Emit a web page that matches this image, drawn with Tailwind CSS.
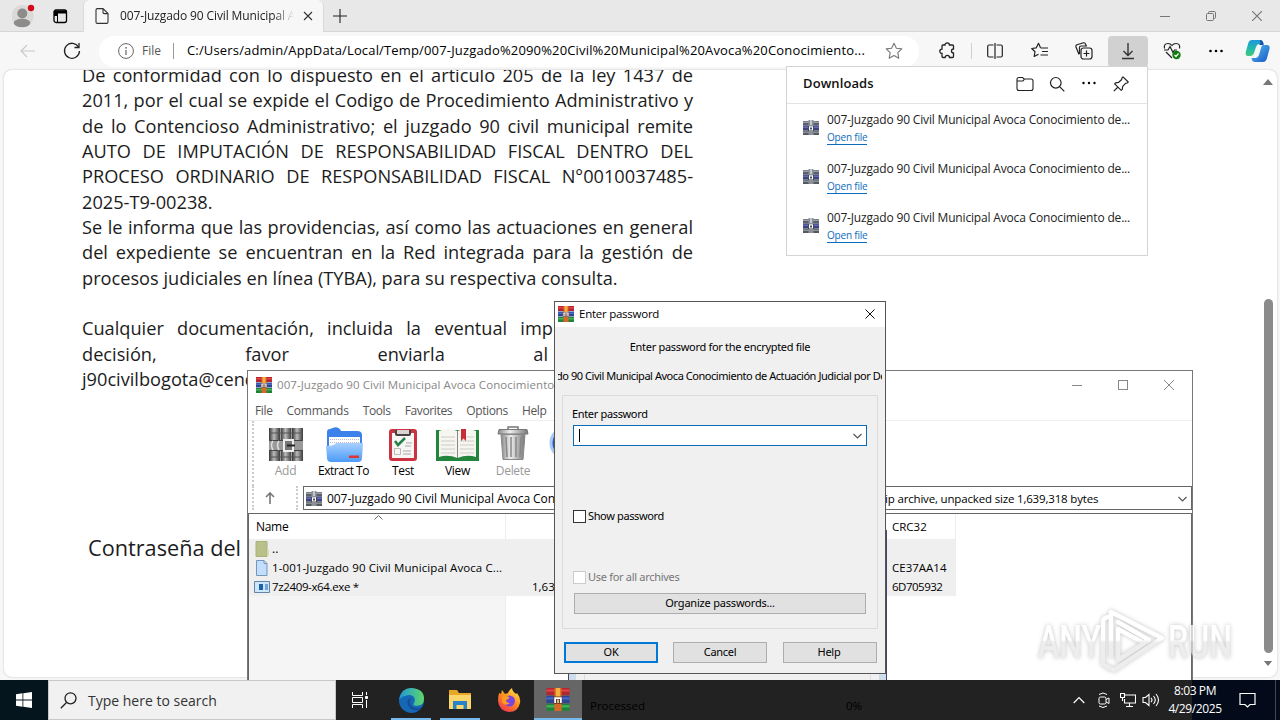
<!DOCTYPE html>
<html lang="en">
<head>
    <meta charset="UTF-8">
    <meta name="viewport" content="width=device-width, initial-scale=1.0">
    <title>007-Juzgado 90 Civil Municipal</title>
    <script src="https://cdn.jsdelivr.net/npm/@tailwindcss/browser@4"></script>
</head>
<body class="relative w-[1280px] h-[720px] overflow-hidden bg-[#f7f7f7] text-black font-['Open_Sans','Noto_Sans',sans-serif]">

    <!-- Shared icons -->
    <svg class="hidden">
        <symbol id="rar" viewBox="0 0 16 16">
            <path fill="#b3262f" d="M0 0h16v5H0z"/><path fill="#dc4444" d="M0 1h16v1.500H0z"/>
            <path fill="#2c4596" d="M0 5.500h16v5H0z"/><path fill="#4a69c8" d="M0 6.500h16V8H0z"/>
            <path fill="#21823b" d="M0 11h16v5H0z"/><path fill="#43b355" d="M0 12h16v1.500H0z"/>
            <path fill="#d8672a" d="M5.500 0h5v16h-5z"/><path fill="#f4b13e" d="M6.500 0h3v6h-3z"/>
            <path fill="#6a3c20" d="M5 6h6v5H5z"/><path fill="none" stroke="#fff" stroke-width="1.200" d="M6 10.500V7h4v3.500"/><path fill="#f0e4cc" d="M7.500 8h1v2.500h-1z"/>
        </symbol>
        <symbol id="zip" viewBox="0 0 16 16">
            <path fill="#5a5f68" d="M0 1h16v4.500H0z"/><path fill="#9da1a8" d="M0 1.500h16V3H0z"/>
            <path fill="#3d4280" d="M0 5.500h16v5H0z"/><path fill="#666cae" d="M0 6.500h16V8H0z"/>
            <path fill="#555a60" d="M0 10.500h16V15H0z"/><path fill="#8b9097" d="M0 11.500h16V13H0z"/>
            <path fill="#8b9099" d="M5.500 0h5v15h-5z"/><path fill="#c4c8ce" d="M7 0h2v5H7z"/>
            <path fill="#33384c" d="M5 6h6v5H5z"/><path fill="none" stroke="#fff" stroke-width="1.200" d="M6.500 10V6.800h3V10z"/>
        </symbol>
    </svg>

    <!-- Browser -->
    <div class="flex flex-col w-[1280px] h-[680px]">
        <div class="flex h-8 bg-[#e8e8e8] border-b border-[#d6d6d6]">
            <div class="flex items-center w-[83px] pl-3">
                <svg class="w-6 h-6" viewBox="0 0 24 24"><circle cx="10.500" cy="12" r="11" fill="#dbd9d7"/><circle cx="10.300" cy="9.500" r="5" fill="#8e8c8a"/><ellipse cx="10" cy="19" rx="8.300" ry="4.200" fill="#8e8c8a"/><circle cx="19" cy="4" r="3.200" fill="#d20a1b"/></svg>
                <svg class="ml-4 w-4 h-4" viewBox="0 0 16 16"><rect x="2" y="2" width="12.500" height="12.500" rx="2" fill="none" stroke="#000" stroke-width="1.300"/><path d="M2 2.500h12.500V5.500H5.500V8H2z"/><path d="M5.500 5v9" stroke="#000"/></svg>
            </div>
            <div class="flex items-center w-[241px] h-8 pl-[11px] bg-[#f7f7f7] rounded-t-md border-x border-[#dadada]">
                <svg class="w-3.5 h-4 shrink-0" viewBox="0 0 14 16" fill="none" stroke="#333" stroke-width="1.100"><path d="M8 .6H2.300Q1 .6 1 2v12q0 1.400 1.300 1.400h9.400q1.300 0 1.300-1.400V5.600zV4.300q0 1.300 1.300 1.300H13"/></svg>
                <div class="ml-[11px] w-[174px] overflow-hidden whitespace-nowrap text-[12px] tracking-[-0.12px] text-[#222] [mask-image:linear-gradient(90deg,#000_88%,transparent)]">007-Juzgado 90 Civil Municipal A</div>
                <svg class="ml-[9px] w-2.5 h-2.5 shrink-0" viewBox="0 0 10 10"><path d="M1 1l8 8M9 1L1 9" stroke="#333" stroke-width="1.100"/></svg>
            </div>
            <svg class="ml-[8px] mt-2 w-4 h-4" viewBox="0 0 16 16"><path d="M8 1v14M1 8h14" stroke="#222" stroke-width="1.100"/></svg>
            <div class="ml-auto flex items-center gap-9 pr-[18px] text-[#777]">
                <svg class="w-2.5 h-2.5" viewBox="0 0 10 10"><path d="M0 5.500h10" stroke="currentColor"/></svg>
                <svg class="w-2.5 h-2.5" viewBox="0 0 10 10" fill="none" stroke="currentColor"><rect x=".5" y="2.500" width="7" height="7" rx="1"/><path d="M2.500 2.500V1.700Q2.500.5 3.700.5h4.500q1.300 0 1.300 1.300v4.500q0 1.200-1.200 1.200h-.8"/></svg>
                <svg class="w-2.5 h-2.5" viewBox="0 0 10 10"><path d="M0 0l10 10M10 0L0 10" stroke="currentColor" stroke-width="1.200"/></svg>
            </div>
        </div>

        <div class="flex items-center h-[38px] shrink-0 text-[#222]">
            <svg class="ml-5 w-4 h-4" viewBox="0 0 16 16" fill="none" stroke="#c8c8c8" stroke-width="1.100"><path d="M7 2L1 8l6 6M1 8h14"/></svg>
            <svg class="ml-[27px] w-[18px] h-[18px]" viewBox="0 0 18 18" fill="none" stroke="currentColor" stroke-width="1.300"><path d="M15.500 5A7.500 7.500 0 1 0 16.500 9"/><path d="M16 1v4.500h-4.500"/></svg>
            <div class="ml-[18px] flex items-center w-[820px] h-[31px] rounded-full bg-white">
                <svg class="ml-[19px] w-4 h-4" viewBox="0 0 16 16"><circle cx="8" cy="8" r="7.400" fill="none" stroke="#666"/><path d="M8 7v5" stroke="#666" stroke-width="1.200"/><circle cx="8" cy="4.800" r=".9" fill="#666"/></svg>
                <div class="ml-2 text-[12px] text-[#555]">File</div>
                <div class="ml-3 w-px h-4 bg-[#999]"></div>
                <div class="ml-[13px] w-[680px] whitespace-nowrap text-[13px] tracking-[0.16px] text-black">C:/Users/admin/AppData/Local/Temp/007-Juzgado%2090%20Civil%20Municipal%20Avoca%20Conocimiento...</div>
                <svg class="ml-[18px] w-[18px] h-[18px] shrink-0" viewBox="0 0 18 18"><path d="M9 1.200l2.400 5 5.400.7-4 3.800 1 5.500L9 13.500l-4.800 2.700 1-5.500-4-3.800 5.400-.7z" fill="none" stroke="#777" stroke-width="1.100" stroke-linejoin="round"/></svg>
            </div>
            <svg class="ml-5 w-[18px] h-[18px] shrink-0" viewBox="0 0 18 18"><path d="M6 3a2.200 2.200 0 0 1 4.400 0h3.100q1 0 1 1v3a2 2 0 0 0 0 4v3.500q0 1-1 1h-3a2.200 2.200 0 0 0-4.400 0H4q-1 0-1-1V11.500a2.200 2.200 0 1 1 0-4.400V4q0-1 1-1z" fill="none" stroke="currentColor" stroke-width="1.300"/></svg>
            <div class="ml-3.5 w-px h-4 bg-[#d0d0d0]"></div>
            <svg class="ml-[15px] w-4 h-4 shrink-0" viewBox="0 0 16 16" fill="none" stroke="currentColor" stroke-width="1.200"><path d="M6.500 2H2.200Q.7 2 .7 3.500v9Q.7 14 2.200 14h4.300M8 0v16M9.500 2h4.300q1.500 0 1.500 1.500v9q0 1.500-1.500 1.500H9.500"/></svg>
            <svg class="ml-7 w-[18px] h-[18px] shrink-0" viewBox="0 0 18 18" fill="none" stroke="currentColor" stroke-width="1.200" stroke-linejoin="round"><path d="M9.500 5.800L7.500 1.300 5.300 5.800l-4.600.7 3.300 3.200-.8 4.800 4.300-2.300M9.500 6H17M11 9.500h6M9.500 13H17"/></svg>
            <svg class="ml-[26px] w-[18px] h-[18px] shrink-0" viewBox="0 0 18 18" fill="none" stroke="currentColor" stroke-width="1.200"><rect x="6" y="6" width="11" height="11" rx="2.500"/><path d="M11.500 8.500v6M8.500 11.500h6M4 12.500L1 5q-.5-1.500 1-2.200L8.500.8Q10 .5 10.500 2l.6 1.600M4.500 12V5.500q0-1.500 1.500-1.500h6"/></svg>
            <div class="ml-[15px] flex items-center justify-center w-[40px] h-[31px] rounded bg-[#d1d1d1] shrink-0">
                <svg class="w-4 h-[18px]" viewBox="0 0 16 18" fill="none" stroke="#333" stroke-width="1.400"><path d="M8 1v12M3.500 9L8 13.500 12.500 9M2 16.500h12"/></svg>
            </div>
            <svg class="ml-[15px] w-[18px] h-[18px] shrink-0" viewBox="0 0 18 18" fill="none" stroke="currentColor" stroke-width="1.200"><path d="M1.500 6.500Q.5 1.500 5 1.500q2.500 0 4 2 1.500-2 4-2 4.500 0 3.500 5M3 10l6 6M1 8h4l2-3.500 3 6L11.500 8H14"/><circle cx="13.500" cy="13" r="4.200" fill="#107c10" stroke="none"/><path d="M11.500 13l1.500 1.500 2.500-3" stroke="#fff"/></svg>
            <svg class="ml-[27px] w-4 h-4 shrink-0" viewBox="0 0 16 16"><circle cx="2.500" cy="8" r="1.300"/><circle cx="8" cy="8" r="1.300"/><circle cx="13.500" cy="8" r="1.300"/></svg>
            <svg class="ml-[21px] w-[25px] h-6 shrink-0" viewBox="0 0 25 24">
                <defs><linearGradient id="cpa" x1="0" y1="0" x2="0" y2="1"><stop offset="0" stop-color="#2098dc"/><stop offset=".5" stop-color="#1fb8b0"/><stop offset="1" stop-color="#42c97c"/></linearGradient><linearGradient id="cpb" x1="0" y1="0" x2="1" y2="1"><stop offset="0" stop-color="#54c0ee"/><stop offset="1" stop-color="#1757c8"/></linearGradient></defs>
                <path fill="url(#cpa)" d="M7 1h8q3 0 3.500 4H14q-2 0-3 3l-2 6q-1 3-4 3H3Q0 17 .8 13l2.500-9Q4.200 1 7 1z"/>
                <path fill="url(#cpb)" d="M18 6h4q3.300 0 2.500 4l-2.500 9q-1 4-4 4h-8q-3 0-3.500-4H11q2 0 3-3l2-7q.6-3 2-3z"/>
                <path fill="#164fae" d="M15 1q3 0 3.700 5H14l1.500-2z"/>
            </svg>
        </div>

        <!-- Document -->
        <div class="relative ml-1 flex h-[607px] w-[1273px] overflow-hidden rounded-lg bg-white shadow-[0_0_2px_#bbb]">
            <div class="ml-[78px] w-[611px] -mt-[7px] text-[18.2px] leading-[25.33px] text-[#1c1c1c] whitespace-nowrap [text-align-last:justify] font-['Open_Sans']">
                <div>De conformidad con lo dispuesto en el articulo 205 de la ley 1437 de</div>
                <div>2011, por el cual se expide el Codigo de Procedimiento Administrativo y</div>
                <div>de lo Contencioso Administrativo; el juzgado 90 civil municipal remite</div>
                <div>AUTO DE IMPUTACIÓN DE RESPONSABILIDAD FISCAL DENTRO DEL</div>
                <div>PROCESO ORDINARIO DE RESPONSABILIDAD FISCAL N°0010037485-</div>
                <div class="[text-align-last:left]">2025-T9-00238.</div>
                <div>Se le informa que las providencias, así como las actuaciones en general</div>
                <div>del expediente se encuentran en la Red integrada para la gestión de</div>
                <div class="[text-align-last:left]">procesos judiciales en línea (TYBA), para su respectiva consulta.</div>
                <div>&nbsp;</div>
                <div>Cualquier documentación, incluida la eventual impugnación de la</div>
                <div class="w-[466px]">decisión, favor enviarla al</div>
                <div class="[text-align-last:left]">j90civilbogota@cendoj</div>
                <div class="mt-[143px] ml-[6px] text-[21.7px] [text-align-last:left]">Contraseña del</div>
            </div>
            <div class="ml-auto flex w-[15px] flex-col items-center pt-[9px] pr-[3px]">
                <svg class="w-2.5 h-1.5 shrink-0" viewBox="0 0 10 6"><path fill="#777" d="M5 0l5 6H0z"/></svg>
                <div class="mt-[214px] w-[9px] h-[354px] shrink-0 rounded-full bg-[#8b8b8b]"></div>
                <svg class="mt-2 w-2.5 h-[5px] shrink-0" viewBox="0 0 10 6"><path fill="#777" d="M5 6l5-6H0z"/></svg>
            </div>
        </div>
    </div>

    <!-- Downloads flyout -->
    <div class="absolute left-[786px] top-[66px] w-[362px] h-[190px] bg-white border border-[#d4d4d4] text-[#222]">
        <div class="flex items-center h-[37px] pl-4 pr-[18px] pb-[3px] border-b border-[#e3e3e3]">
            <div class="text-[13px] font-semibold tracking-[0.1px] text-[#111]">Downloads</div>
            <svg class="ml-auto w-[18px] h-4" viewBox="0 0 18 16" fill="none" stroke="currentColor" stroke-width="1.100"><path d="M1 3.500Q1 1.500 3 1.500h3.500L8 3h7q2 0 2 2v7.500q0 2-2 2H3q-2 0-2-2zM1 5h6l1.500-2"/></svg>
            <svg class="ml-[15px] w-4 h-4" viewBox="0 0 16 16" fill="none" stroke="currentColor" stroke-width="1.200"><circle cx="6.800" cy="6.800" r="5.300"/><path d="M10.800 10.800l4.500 4.500"/></svg>
            <svg class="ml-4 w-4 h-4" viewBox="0 0 16 16"><circle cx="2.500" cy="7" r="1.200"/><circle cx="8" cy="7" r="1.200"/><circle cx="13.500" cy="7" r="1.200"/></svg>
            <svg class="ml-4 w-4 h-4" viewBox="0 0 16 16" fill="none" stroke="currentColor" stroke-width="1.200" stroke-linejoin="round"><path d="M10 .8L15.200 6l-1 1-1.700.4-2.800 3-.5 3.200-1 .8-6.500-6.500.8-1 3.200-.6 3-2.800L9 1.800zM4.500 11.500L.8 15.200"/></svg>
        </div>
        <div class="flex flex-col gap-[15px] pt-2">
            <div class="flex h-[34px] pl-4"><svg class="mt-2 w-4 h-4"><use href="#zip"/></svg><div class="ml-2 whitespace-nowrap"><div class="text-[12px] tracking-[-0.17px] leading-4">007-Juzgado 90 Civil Municipal Avoca Conocimiento de...</div><div class="mt-0.5 w-fit border-b border-[#0b6cbd] text-[10px] tracking-[-0.2px] leading-[14px] text-[#0b6cbd]">Open file</div></div></div>
            <div class="flex h-[34px] pl-4"><svg class="mt-2 w-4 h-4"><use href="#zip"/></svg><div class="ml-2 whitespace-nowrap"><div class="text-[12px] tracking-[-0.17px] leading-4">007-Juzgado 90 Civil Municipal Avoca Conocimiento de...</div><div class="mt-0.5 w-fit border-b border-[#0b6cbd] text-[10px] tracking-[-0.2px] leading-[14px] text-[#0b6cbd]">Open file</div></div></div>
            <div class="flex h-[34px] pl-4"><svg class="mt-2 w-4 h-4"><use href="#zip"/></svg><div class="ml-2 whitespace-nowrap"><div class="text-[12px] tracking-[-0.17px] leading-4">007-Juzgado 90 Civil Municipal Avoca Conocimiento de...</div><div class="mt-0.5 w-fit border-b border-[#0b6cbd] text-[10px] tracking-[-0.2px] leading-[14px] text-[#0b6cbd]">Open file</div></div></div>
        </div>
    </div>

    <!-- Archive window -->
    <div class="absolute left-[247px] top-[370px] w-[946px] h-[320px] bg-white border border-[#777] text-[12px] whitespace-nowrap">
        <div class="flex items-center h-[30px] pl-2 pr-[18px] pb-[3px] text-[#888]">
            <svg class="w-4 h-4"><use href="#rar"/></svg>
            <div class="ml-[5px] text-[11.500px] tracking-[0.07px]">007-Juzgado 90 Civil Municipal Avoca Conocimiento</div>
            <div class="ml-auto flex items-center gap-9">
                <svg class="w-2.5 h-2.5" viewBox="0 0 10 10"><path d="M0 5.500h10" stroke="currentColor"/></svg>
                <svg class="w-2.5 h-2.5" viewBox="0 0 10 10"><rect x=".5" y=".5" width="9" height="9" fill="none" stroke="currentColor"/></svg>
                <svg class="w-2.5 h-2.5" viewBox="0 0 10 10"><path d="M0 0l10 10M10 0L0 10" stroke="currentColor"/></svg>
            </div>
        </div>
        <div class="flex items-center h-5 pl-[7px] gap-[14px] border-b border-[#eee] tracking-[-0.36px] text-[#555]">
            <span>File</span><span class="tracking-[-0.25px]">Commands</span><span>Tools</span><span>Favorites</span><span>Options</span><span>Help</span>
        </div>
        <div class="ml-[4px] flex h-[65px] pt-1.5 border-l-2 border-dotted border-[#ccc] tracking-[-0.3px] leading-[18px]">
            <div class="flex w-[63px] flex-col items-center text-[#999]">
                <svg class="w-[34px] h-[35px]" viewBox="0 0 34 35">
                    <defs><linearGradient id="gr"><stop offset="0" stop-color="#333"/><stop offset=".45" stop-color="#bbb"/><stop offset="1" stop-color="#3a3a3a"/></linearGradient></defs>
                    <path fill="url(#gr)" d="M0 1h11v33H0z"/><path fill="url(#gr)" d="M11.500 1h11v33h-11z"/><path fill="url(#gr)" d="M23 1h11v33H23z"/>
                    <path stroke="#555" d="M0 6h34M0 30h34"/><path fill="#999" d="M0 14h34v9H0z"/><path stroke="#444" d="M0 13.500h34M0 23.500h34"/>
                    <rect x="15" y="13" width="9" height="11" fill="#777" stroke="#eee" stroke-width="2"/><path d="M18 18.500h8" stroke="#222" stroke-width="2"/><path d="M4 14q-3 4 0 9M10 14q-3 4 0 9" stroke="#ddd" stroke-width="1.500" fill="none"/>
                </svg>
                <span>Add</span>
            </div>
            <div class="ml-px flex w-[51px] flex-col items-center">
                <svg class="w-[38px] h-[35px]" viewBox="0 0 38 35"><defs><linearGradient id="fo" x1="0" y1="0" x2="0" y2="1"><stop offset="0" stop-color="#a8d0ff"/><stop offset="1" stop-color="#4b9bf5"/></linearGradient></defs><path fill="#3c82ea" d="M2 5q0-3 3-3l4-1.500q5-1 7 3.500h16q5 0 5 4v14H2z"/><path fill="#fff" d="M4 10h31v12H4z"/><path stroke="#bbc" stroke-dasharray="1 1" d="M5 12.500h29M5 15.500h29"/><path fill="url(#fo)" d="M1 19q8 0 10-3h16q8 0 11 0l-1 15q0 4-4 4H6q-4 0-4-4z"/><path fill="#e03434" d="M24 28.500h10v2.500H24z"/></svg>
                <span class="tracking-[-0.5px]">Extract To</span>
            </div>
            <div class="ml-[2px] flex w-[64px] flex-col items-center">
                <svg class="w-7 h-[35px]" viewBox="0 0 28 35"><rect y="2" width="28" height="32" rx="3" fill="#cc3340"/><path fill="#f8f6f4" d="M3 6h22v25H3z"/><path fill="#4a4040" d="M6 3h16v4q0 2-2 2H8q-2 0-2-2z"/><path fill="#d9d4d4" d="M8 3h12v4H8z"/><path d="M6 14l3 4 7-7" fill="none" stroke="#23804a" stroke-width="2.500"/><path d="M17 16h6M16 19h6M14 24h8M14 27h8" stroke="#aaa"/><path fill="none" stroke="#bbb" d="M5.500 21.500h6v6h-6z"/></svg>
                <span>Test</span>
            </div>
            <div class="flex w-[45px] flex-col items-center">
                <svg class="w-[43px] h-[35px]" viewBox="0 0 43 35"><path fill="#23853c" d="M0 3h43v31H0z"/><path fill="#f7f5ef" d="M3 4q9-4 18.500 0Q31 0 40 4v26q-9-3-18.500 1Q12 27 3 30z"/><path d="M5 10h14M5 14h14M5 18h14M5 22h14M5 26h14M24 10h14M24 14h14M24 18h14M24 22h14M24 26h14" stroke="#ccc"/><path d="M21.500 4v27" stroke="#888"/><path fill="#c92c38" d="M25 2h5v12l-2.500-2.500L25 14z"/></svg>
                <span>View</span>
            </div>
            <div class="ml-px flex w-[64px] flex-col items-center text-[#999]">
                <svg class="-mt-px mb-px w-[32px] h-[35px]" viewBox="0 0 32 35"><defs><linearGradient id="tr"><stop offset="0" stop-color="#888"/><stop offset=".4" stop-color="#eee"/><stop offset="1" stop-color="#777"/></linearGradient></defs><path fill="none" stroke="#777" stroke-width="1.500" d="M11 3V1h10v2"/><path fill="url(#tr)" stroke="#777" d="M2 3.500h28l1 4.500H1z"/><path fill="url(#tr)" stroke="#888" d="M4 8.500h24l-2 25H6z"/><path d="M9 11l1 20M14 11v20M19 11v20M24 11l-1 20" stroke="#888" stroke-width="1.500"/></svg>
                <span>Delete</span>
            </div>
            <svg class="ml-[4px] w-[34px] h-[34px] shrink-0" viewBox="0 0 34 34"><circle cx="17" cy="16" r="15" fill="#3454b8" stroke="#a7c8f4" stroke-width="3"/></svg>
        </div>
        <div class="ml-[4px] flex h-[24px] border-l-2 border-dotted border-[#ccc]">
            <div class="flex w-[44px] items-center justify-start pl-[11px] border-r-2 border-dotted border-[#ccc]"><svg class="w-2.5 h-3" viewBox="0 0 10 12"><path d="M5 12V1M1 5l4-4 4 4" fill="none" stroke="#777" stroke-width="1.600"/></svg></div>
            <div class="relative ml-[5px] flex w-[889px] h-[24px] items-center pl-[2px] pt-px border border-[#666]">
                <svg class="w-4 h-4"><use href="#zip"/></svg>
                <div class="ml-[5px] w-[240px] overflow-hidden tracking-[-0.05px]">007-Juzgado 90 Civil Municipal Avoca Conocimiento</div>
                <div class="absolute left-[581px] text-[11.500px] tracking-[-0.17px]">ip archive, unpacked size 1,639,318 bytes</div>
                <svg class="absolute right-1 w-[9px] h-1.5" viewBox="0 0 9 6"><path d="M.5 1l4 4 4-4" fill="none" stroke="#555" stroke-width="1.200"/></svg>
            </div>
        </div>
        <div class="mt-[3px] flex h-[170px] border-t border-x border-[#666]">
            <div class="relative w-[257px] bg-[linear-gradient(#fff_25px,#f5f5f5_25px)] border-r border-[#eee]">
                <svg class="absolute left-[125px] top-[1px] w-[9px] h-[5px]" viewBox="0 0 9 5"><path d="M.5 4.500l4-4 4 4" fill="none" stroke="#666"/></svg>
                <div class="flex items-center h-[25px] pl-[7px] pt-px tracking-[-0.3px]">Name</div>
                <div class="bg-[#efefef] h-[57px]">
                    <div class="flex items-center h-[19px] pl-[6px]"><svg class="w-[15px] h-4" viewBox="0 0 15 16"><path fill="#b9c08a" stroke="#aab277" d="M1 .5h11v15H1z"/><path fill="#d7dbb4" d="M12 9h2v6h-2z"/></svg><span class="ml-[2px]">..</span></div>
                    <div class="flex items-center h-[19px] pl-[6px]"><svg class="w-[15px] h-4" viewBox="0 0 15 16"><path fill="#c3defa" stroke="#7297bd" d="M1.500.5H9l3 3v12H1.500zM9 .5v3h3"/></svg><span class="ml-[2px] text-[11.500px] tracking-[0.1px]">1-001-Juzgado 90 Civil Municipal Avoca C...</span></div>
                    <div class="flex items-center h-[19px] pl-[5px]"><svg class="w-4 h-3" viewBox="0 0 16 12"><path fill="#cfe6fa" stroke="#6286a8" d="M.5.500h15v11H.5z"/><path fill="#1763ac" d="M5 3h4v6H5z"/><path d="M11 4h3M11 6h3M11 8h3" stroke="#1763ac"/></svg><span class="ml-[2px] text-[11.500px] tracking-[-0.36px]">7z2409-x64.exe *</span></div>
                </div>
            </div>
            <div class="w-[380px]">
                <div class="h-[25px]"></div>
                <div class="flex h-[57px] bg-[#efefef] items-end pl-[26px] text-[11.500px] leading-[19px]">1,639,318</div>
            </div>
            <div class="w-[70px] border-r border-[#eee] h-[82px]">
                <div class="flex items-center h-[25px] pl-[6px] pt-px text-[11.500px]">CRC32</div>
                <div class="h-[57px] bg-[#efefef] pt-[19px] pl-[6px] leading-[19px] text-[11.500px]"><div>CE37AA14</div><div class="tracking-[-0.5px]">6D705932</div></div>
            </div>
        </div>
    </div>

    <!-- Extraction progress window, mostly covered -->
    <div class="absolute left-[568px] top-[530px] w-[319px] h-[160px] border-x border-[#446] bg-[#f0f0f0] px-[7px] shadow-[inset_7px_0_#cfdcec,inset_-7px_0_#cfdcec]">
        <div class="mx-2 h-full border-x border-[#ddd]"></div>
    </div>

    <!-- Password dialog -->
    <div class="absolute left-[554px] top-[301px] w-[332px] h-[373px] flex flex-col bg-[#f0f0f0] border border-[#555] text-[11px] tracking-[-0.3px] whitespace-nowrap font-['Noto_Sans',sans-serif]">
        <div class="flex items-center h-[25px] pl-[3px] pr-[10px] pb-px bg-white">
            <svg class="w-4 h-4"><use href="#rar"/></svg>
            <div class="ml-[5px] text-[11.500px] tracking-[-0.25px] font-['Open_Sans']">Enter password</div>
            <svg class="ml-auto w-2.5 h-2.5" viewBox="0 0 11 11"><path d="M.5.500l10 10M10.500.500l-10 10" stroke="#111" stroke-width="1.100"/></svg>
        </div>
        <div class="mt-[11px] text-center leading-[18px]">Enter password for the encrypted file</div>
        <div class="mt-[11px] mx-[3px] overflow-hidden leading-[18px] tracking-[-0.45px]"><div class="-ml-[2px]">do 90 Civil Municipal Avoca Conocimiento de Actuación Judicial por De</div></div>
        <div class="mx-[7px] mt-[10px] h-[234px] border border-[#dcdcdc] pl-[10px]">
            <div class="mt-[9px] -ml-px leading-[18px] tracking-[-0.34px]">Enter password</div>
            <div class="mt-[2px] flex w-[294px] h-[21px] items-center justify-between border border-[#0a6ab4] bg-white pl-[5px] pr-1">
                <div class="w-px h-[13px] bg-black mb-px"></div>
                <svg class="w-[9px] h-1.5" viewBox="0 0 9 6"><path d="M.5 1l4 4 4-4" fill="none" stroke="#555" stroke-width="1.200"/></svg>
            </div>
            <div class="mt-[61px] flex items-center h-[18px]"><div class="w-[13px] h-[13px] border border-[#333] bg-white"></div><span class="ml-[2px] tracking-[-0.36px]">Show password</span></div>
            <div class="mt-[43px] flex items-center h-[18px] text-[#777]"><div class="w-[13px] h-[13px] border border-[#ccc] bg-white"></div><span class="ml-[2px]">Use for all archives</span></div>
            <div class="ml-px mt-[7px] flex w-[292px] h-[21px] items-center justify-center border border-[#adadad] bg-[#e1e1e1] tracking-[-0.2px]">Organize passwords...</div>
        </div>
        <div class="mt-[13px] ml-[9px] flex gap-[15px]">
            <div class="flex w-[94px] h-[21px] items-center justify-center border-2 border-[#0078d7] bg-[#e1e1e1]">OK</div>
            <div class="flex w-[94px] h-[21px] items-center justify-center border border-[#adadad] bg-[#e1e1e1]">Cancel</div>
            <div class="ml-px flex w-[94px] h-[21px] items-center justify-center border border-[#adadad] bg-[#e1e1e1] pr-[2px]">Help</div>
        </div>
    </div>

    <!-- Watermark -->
    <svg class="absolute left-[1030px] top-[602px] w-[210px] h-[76px] [filter:drop-shadow(0_0_2px_#aaa)] opacity-70" viewBox="0 0 210 76">
        <defs><linearGradient id="wm" gradientUnits="userSpaceOnUse" x1="0" y1="10" x2="0" y2="66"><stop offset=".5" stop-color="#fff"/><stop offset=".54" stop-color="#e6e6e6"/></linearGradient></defs>
        <g fill="url(#wm)" font-family="Roboto" font-size="47" font-weight="500">
            <text x="8" y="56" textLength="63" lengthAdjust="spacingAndGlyphs">ANY</text>
            <text x="138" y="56" textLength="64" lengthAdjust="spacingAndGlyphs">RUN</text>
        </g>
        <g fill="none" stroke="url(#wm)" stroke-width="4.500" stroke-linejoin="round" stroke-linecap="round"><path d="M73 62V20q0-4 5-5M81 54V10l51 26-48 32-8-4M88 20l31 18-31 20V27l24 13"/></g>
    </svg>

    <!-- Taskbar -->
    <div class="absolute left-0 top-[680px] flex w-[1280px] h-10 bg-[linear-gradient(90deg,#222_1192px,#030b1a_1192px,#030b1a_1275px,#445_1275px,#445_1276px,#030b1a_1276px)] text-white">
        <div class="flex w-12 items-center justify-center bg-[#04151d]"><svg class="w-4 h-4" viewBox="0 0 16 16" fill="#fff"><path d="M0 2.300L6.500 1.300V7.600H0zM7.300 1.200L16 0v7.600H7.300zM0 8.400h6.500v6.300L0 13.700zM7.300 8.400H16V16l-8.700-1.200z"/></svg></div>
        <div class="flex w-[288px] items-center border border-[#c8c8c8] bg-[#f1f1f1] pl-[11px]">
            <svg class="w-[17px] h-[17px]" viewBox="0 0 17 17" fill="none" stroke="#222" stroke-width="1.300"><circle cx="10.500" cy="6.300" r="5.500"/><path d="M6.500 10.500L.8 16.200"/></svg>
            <div class="ml-[11px] text-[14px] text-[#333]">Type here to search</div>
        </div>
        <div class="flex w-[48px] items-center justify-center"><svg class="w-4 h-4" viewBox="0 0 16 16" fill="none" stroke="#fff"><path d="M.5 0v3.500h10V0M.5 16v-3.500h10V16M.5 5.500h10v5H.5zM14.500 0v3M14.500 8v8"/><path fill="#fff" d="M13.500 4.500h2v2h-2z"/></svg></div>
        <div class="ml-[7px] flex w-10 flex-col items-center border-b-2 border-[#76b9ed]"><svg class="mt-2 w-[25px] h-[25px]" viewBox="0 0 24 24"><defs><linearGradient id="eg" x1="0" y1=".3" x2="1" y2=".3"><stop offset="0" stop-color="#2197d8"/><stop offset="1" stop-color="#5ed66b"/></linearGradient></defs><circle cx="12" cy="12" r="12" fill="#1468b4"/><path fill="url(#eg)" d="M0 11Q2 0 12 0q12 1 12 10 0 7-7 7-4 0-3-2 2-2 1-5-2-4-7-3-5 1-8 4z"/><path fill="#14509b" d="M8 13q0 9 10 8.500 3-1 4.500-3.500-3 2-7 1-5-1-5-6 0-2 1.500-3.500Q8 10 8 13z"/></svg></div>
        <div class="ml-[9px] flex w-10 flex-col items-center border-b-2 border-[#76b9ed]"><svg class="mt-[10px] w-[22px] h-5" viewBox="0 0 22 20"><path fill="#e8a827" d="M0 0h8l2 3h12v5H0z"/><path fill="#fbd66b" d="M0 5h22v14H0z"/><path fill="#2a83c8" d="M4 11h14v8h-3.500v-4h-7v4H4z"/></svg></div>
        <div class="ml-[9px] flex w-10 justify-center"><svg class="mt-2 w-6 h-6" viewBox="0 0 24 24"><defs><linearGradient id="ff" x1=".8" y1="0" x2=".2" y2="1"><stop offset="0" stop-color="#ffe34a"/><stop offset=".5" stop-color="#ff8a1e"/><stop offset="1" stop-color="#ef2d56"/></linearGradient></defs><path fill="url(#ff)" d="M2 5l2 1 1-4 3 4 3-1Q12 2 15 0q0 3 4 6l1-1q4 5 3 10-2 9-11 9Q2 23 1 13 1 9 2 5z"/><circle cx="12.500" cy="13" r="5.500" fill="#7a45dc"/><path fill="#ff9a20" d="M5 9q4-2 7 0 1 2-3 3 0 3 4 3-5 4-8-1z"/></svg></div>
        <div class="ml-[5px] flex w-12 flex-col items-center border-b-2 border-[#76b9ed] bg-[#666]"><svg class="mt-2 w-6 h-[23px]"><use href="#rar"/></svg></div>
        <div class="ml-2 mt-[17px] flex w-[272px] justify-between text-[11.500px] leading-[18px] text-black"><span>Processed</span><span>0%</span></div>
        <div class="ml-auto flex items-center gap-2.5 pr-2">
            <svg class="w-3 h-2" viewBox="0 0 12 8"><path d="M.7 7L6 1.500 11.300 7" fill="none" stroke="#fff" stroke-width="1.200"/></svg>
            <svg class="ml-[3px] w-3 h-4" viewBox="0 0 12 16" fill="none" stroke="#fff"><rect x="1" y="5" width="7" height="7" rx="1.500"/><path d="M8 7.500L11 6v5.500L8 10M1 2.500q4-3 8 0M1 14q4 3 8 0"/></svg>
            <svg class="w-4 h-4" viewBox="0 0 16 16" fill="none" stroke="#fff" stroke-width="1.100"><path d="M5 3h10.500v8H4.500V7M9.500 11v3.500M6 14.500h7"/><path d="M.5 1.500h4v4h-4zM2.500 5.500V9"/></svg>
            <svg class="-ml-1 w-[18px] h-4" viewBox="0 0 18 16" fill="none" stroke="#fff" stroke-width="1.100"><path d="M1 5.500h2.500L7 2.500v11L3.500 10.500H1zM9 6q2 2 0 4M11.500 4q3.500 4 0 8M14 2q5 6 0 12"/></svg>
        </div>
        <div class="w-[54px] mr-[58px] pt-[2px] text-center text-[12px] leading-[18px] whitespace-nowrap tracking-[-0.4px]"><div>8:03 PM</div><div>4/29/2025</div></div>
        <svg class="absolute right-6 top-3 w-[17px] h-[17px]" viewBox="0 0 17 17"><path d="M1 1.500h15v11h-5L8.500 15 6 12.500H1z" fill="none" stroke="#fff" stroke-width="1.200"/></svg>
    </div>
</body>
</html>
